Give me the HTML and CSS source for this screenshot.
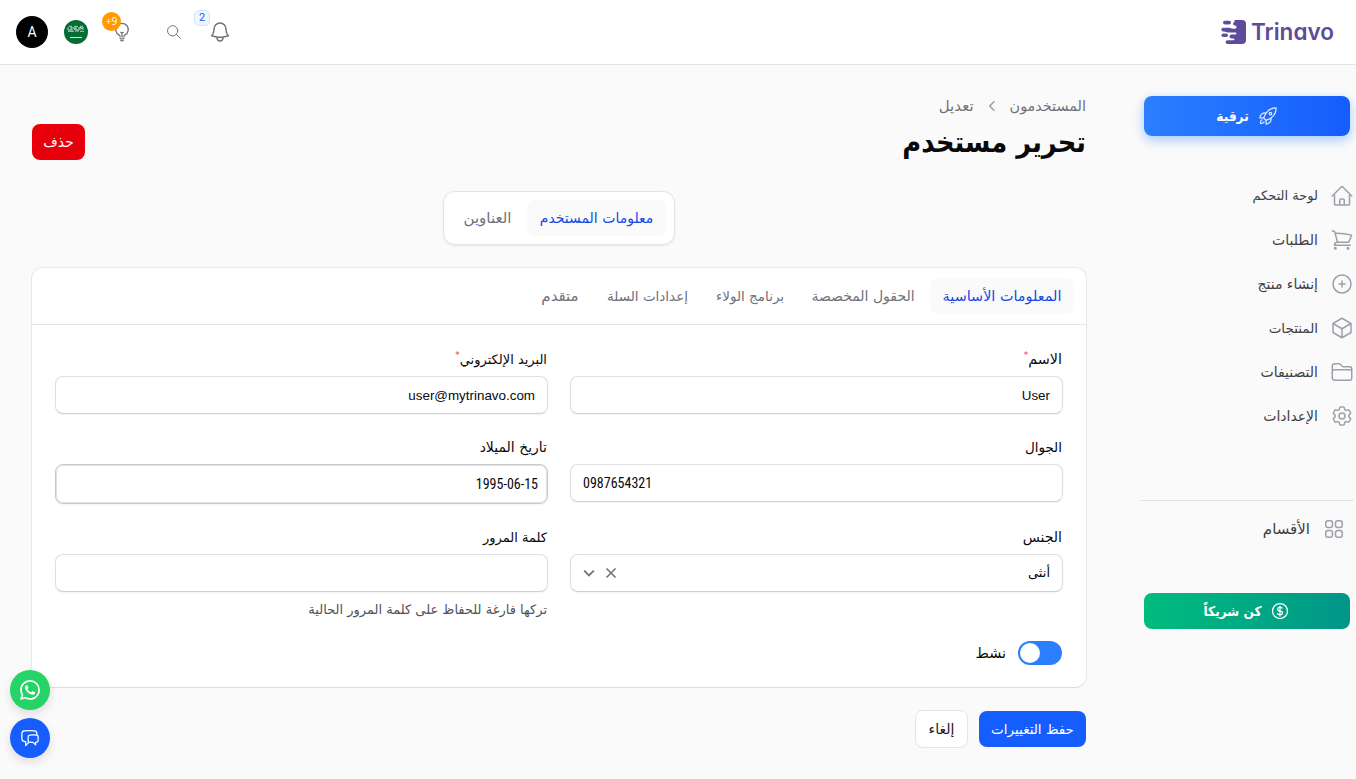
FILE: index.html
```html
<!DOCTYPE html>
<html lang="ar" dir="rtl">
<head>
<meta charset="utf-8">
<title>تحرير مستخدم</title>
<link rel="stylesheet" href="styles.css">
</head>
<body>
<header class="topbar">
  <div class="logo" dir="ltr">
    <svg class="logo-mark" width="26" height="24" viewBox="0 0 26 24" fill="#5f4b9b"><path d="M13.500 0h7.500a4 4 0 0 1 4 4v16a4 4 0 0 1-4 4H6.500a1.900 1.900 0 0 1 0-3.800H12c2 0 2-1.700 0-1.700h-1.500a2 2 0 0 1 0-4H14c2 0 2-2 0-2H7c-2 0-2-1-4-1H2.200a1.900 1.900 0 0 1 0-3.800H8c2 0 2 1 4 1h2c2 0 2-3 0-3.200h-.5a1.800 1.800 0 0 1 0-3.500z"/><rect x="2" y=".8" width="8" height="3.600" rx="1.800"/><rect x="0.500" y="13.500" width="6.500" height="3.600" rx="1.800"/></svg>
    <span class="logo-text">Trinavo</span>
  </div>
  <div class="tools">
    <div class="tool bell"><svg width="24" height="24" viewBox="0 0 24 24" fill="none" stroke="#71717b" stroke-width="1.500" stroke-linecap="round" stroke-linejoin="round"><path d="M14.857 17.082a24 24 0 0 0 5.454-1.310A8.970 8.970 0 0 1 18 9.750V9A6 6 0 0 0 6 9v.75a8.970 8.970 0 0 1-2.312 6.022c1.733.64 3.560 1.085 5.455 1.310m5.714 0a24.300 24.300 0 0 1-5.714 0m5.714 0a3 3 0 1 1-5.714 0"/></svg><span class="count">2</span></div>
    <div class="tool search"><svg width="16" height="16" viewBox="0 0 24 24" fill="none" stroke="#71717b" stroke-width="1.500" stroke-linecap="round"><path d="m21.500 21.500-5.700-5.700M17.700 10.200a7.700 7.700 0 1 1-15.400 0 7.700 7.700 0 0 1 15.400 0"/></svg></div>
    <div class="tool bulb"><svg width="20" height="20" viewBox="0 0 24 24" fill="none" stroke="#71717b" stroke-width="1.500" stroke-linecap="round" stroke-linejoin="round"><path d="M12 18v-5.250m0 0a6 6 0 0 0 1.500-.189m-1.500.189a6 6 0 0 1-1.500-.189m3.750 7.478a12 12 0 0 1-4.500 0m3.750 2.383a14.400 14.400 0 0 1-3 0M14.250 18v-.192c0-.983.658-1.823 1.508-2.316a7.500 7.500 0 1 0-7.517 0c.85.493 1.509 1.333 1.509 2.316V18"/></svg><span class="tips" dir="ltr">+9</span></div>
    <div class="flag"><svg width="24" height="24" viewBox="0 0 24 24"><circle cx="12" cy="12" r="12" fill="#046c35"/><g fill="none" stroke="#dcebe1" stroke-width=".8"><path d="M4 7v3h3V7m1 0v4m1-4 2 3V7m1 0v3h3V7m1 3V7l2 2V7m1 0v3M4 11.300h6m1-.3h4m1 .3h4M5 6.300h3m2 0h4m2 0h3"/><path d="M6 17.500h12" stroke-width="1"/></g></svg></div>
    <div class="avatar">A</div>
  </div>
</header>
<div class="body">
  <aside class="side">
    <a class="cta upgrade"><svg width="20" height="20" viewBox="0 0 24 24" fill="none" stroke="#fff" stroke-opacity=".85" stroke-width="1.500" stroke-linecap="round" stroke-linejoin="round"><path d="M15.590 14.370a6 6 0 0 1-5.840 7.380v-4.800m5.840-2.580a14.980 14.980 0 0 0 6.160-12.120A14.980 14.980 0 0 0 9.631 8.410m5.960 5.960a14.900 14.900 0 0 1-5.841 2.580m-.119-8.540a6 6 0 0 0-7.381 5.840h4.800m2.581-5.840a14.900 14.900 0 0 0-2.580 5.840m2.699 2.700a15 15 0 0 1-.311.060 15.100 15.100 0 0 1-2.448-2.448l.060-.312m-2.240 2.390a4.490 4.490 0 0 0-1.757 4.306 4.490 4.490 0 0 0 4.306-1.758M16.500 9a1.500 1.500 0 1 1-3 0 1.500 1.500 0 0 1 3 0"/></svg><span class="t">ترقية</span></a>
    <nav class="nav">
      <a class="item"><svg class="ico" viewBox="0 0 24 24"><path d="m2.250 12 8.954-8.955a1.130 1.130 0 0 1 1.592 0L21.750 12M4.500 9.750v10.125c0 .621.504 1.125 1.125 1.125H9.750v-4.875c0-.621.504-1.125 1.125-1.125h2.250c.621 0 1.125.504 1.125 1.125V21h4.125c.621 0 1.125-.504 1.125-1.125V9.750M8.250 21h8.250"/></svg><span class="t xs">لوحة التحكم</span></a>
      <a class="item"><svg class="ico" viewBox="0 0 24 24"><path d="M2.250 3h1.386c.51 0 .955.343 1.087.835l.383 1.437M7.500 14.250a3 3 0 0 0-3 3h15.750m-12.750-3h11.218a60 60 0 0 0 2.890-7.140A60.100 60.100 0 0 0 5.106 5.272M7.500 14.250 5.106 5.272M6 20.250a.75.75 0 1 1-1.500 0 .75.75 0 0 1 1.500 0m12.750 0a.75.75 0 1 1-1.500 0 .75.75 0 0 1 1.500 0"/></svg><span class="t md">الطلبات</span></a>
      <a class="item"><svg class="ico" viewBox="0 0 24 24"><path d="M12 9v6m3-3H9m12 0a9 9 0 1 1-18 0 9 9 0 0 1 18 0"/></svg><span class="t md">إنشاء منتج</span></a>
      <a class="item"><svg class="ico" viewBox="0 0 24 24"><path d="m21 7.500-9-5.250L3 7.500m18 0-9 5.250m9-5.250v9l-9 5.250M3 7.500l9 5.250M3 7.500v9l9 5.250m0-9v9"/></svg><span class="t sm">المنتجات</span></a>
      <a class="item"><svg class="ico" viewBox="0 0 24 24"><path d="M2.250 12.750V6A2.250 2.250 0 0 1 4.500 3.750h4.629a1.500 1.500 0 0 1 1.060.44l2.122 2.120a1.500 1.500 0 0 0 1.060.44H19.500A2.250 2.250 0 0 1 21.750 9v9a2.250 2.250 0 0 1-2.250 2.250h-15A2.250 2.250 0 0 1 2.250 18v-5.250M2.250 11.600A2.250 2.250 0 0 1 4.500 9.750h15a2.250 2.250 0 0 1 2.250 1.850"/></svg><span class="t md">التصنيفات</span></a>
      <a class="item"><svg class="ico" viewBox="0 0 24 24"><path d="M9.594 3.940c.09-.542.56-.94 1.110-.94h2.593c.55 0 1.020.398 1.110.94l.213 1.281c.063.374.313.686.645.870q.11.060.22.127c.325.196.72.257 1.075.124l1.217-.456a1.125 1.125 0 0 1 1.370.490l1.296 2.247a1.125 1.125 0 0 1-.260 1.431l-1.003.827c-.293.241-.438.613-.430.992a7 7 0 0 1 0 .255c-.008.378.137.750.430.991l1.004.827c.424.350.534.955.260 1.430l-1.298 2.247a1.125 1.125 0 0 1-1.369.491l-1.217-.456c-.355-.133-.750-.072-1.076.124a7 7 0 0 1-.220.128c-.331.183-.581.495-.644.869l-.213 1.281c-.090.543-.560.940-1.110.940h-2.594c-.550 0-1.019-.398-1.110-.940l-.213-1.281c-.062-.374-.312-.686-.644-.870a7 7 0 0 1-.220-.127c-.325-.196-.720-.257-1.076-.124l-1.217.456a1.125 1.125 0 0 1-1.369-.490l-1.297-2.247a1.125 1.125 0 0 1 .260-1.431l1.004-.827c.292-.240.437-.613.430-.991a7 7 0 0 1 0-.255c.007-.380-.138-.751-.430-.992l-1.004-.827a1.125 1.125 0 0 1-.260-1.430l1.297-2.247a1.125 1.125 0 0 1 1.370-.491l1.216.456c.356.133.751.072 1.076-.124q.108-.066.220-.128c.332-.183.582-.495.644-.869z"/><path d="M15 12a3 3 0 1 1-6 0 3 3 0 0 1 6 0"/></svg><span class="t md">الإعدادات</span></a>
    </nav>
    <hr class="rule">
    <a class="item sections"><svg class="ico" viewBox="0 0 24 24"><path d="M3.750 6A2.250 2.250 0 0 1 6 3.750h2.250A2.250 2.250 0 0 1 10.500 6v2.250a2.250 2.250 0 0 1-2.250 2.250H6a2.250 2.250 0 0 1-2.250-2.250zM3.750 15.750A2.250 2.250 0 0 1 6 13.500h2.250a2.250 2.250 0 0 1 2.250 2.250V18a2.250 2.250 0 0 1-2.250 2.250H6A2.250 2.250 0 0 1 3.750 18zM13.500 6a2.250 2.250 0 0 1 2.250-2.250H18A2.250 2.250 0 0 1 20.250 6v2.250A2.250 2.250 0 0 1 18 10.500h-2.250a2.250 2.250 0 0 1-2.250-2.250zM13.500 15.750a2.250 2.250 0 0 1 2.250-2.250H18a2.250 2.250 0 0 1 2.250 2.250V18A2.250 2.250 0 0 1 18 20.250h-2.250A2.250 2.250 0 0 1 13.500 18z"/></svg><span class="t xl">الأقسام</span></a>
    <a class="cta partner"><svg width="20" height="20" viewBox="0 0 24 24" fill="none" stroke="#fff" stroke-width="1.500" stroke-linecap="round" stroke-linejoin="round"><path d="M12 6v12m-3-2.818.879.659c1.171.879 3.070.879 4.242 0s1.172-2.303 0-3.182C13.536 12.219 12.768 12 12 12c-.725 0-1.450-.220-2.003-.659-1.106-.879-1.106-2.303 0-3.182s2.900-.879 4.006 0l.415.330M21 12a9 9 0 1 1-18 0 9 9 0 0 1 18 0"/></svg><span class="t">كن شريكاً</span></a>
  </aside>
  <main class="main">
    <div class="page-head">
      <div>
        <div class="crumbs"><span class="t lg">المستخدمون</span><svg width="20" height="20" viewBox="0 0 20 20" fill="none" stroke="#9f9fa9" stroke-width="1.600" stroke-linecap="round" stroke-linejoin="round"><path d="M12 5.700 7.700 10l4.300 4.300"/></svg><span class="t xl">تعديل</span></div>
        <h1 class="title">تحرير مستخدم</h1>
      </div>
      <button class="btn danger"><span class="t md">حذف</span></button>
    </div>
    <div class="pills"><a class="tab on md" style="width:115px">معلومات المستخدم</a><a class="tab xl" style="width:47px">العناوين</a></div>
    <section class="card">
      <div class="tabs"><a class="tab on lg" style="width:120px">المعلومات الأساسية</a><a class="tab md" style="width:102px">الحقول المخصصة</a><a class="tab sm" style="width:68px">برنامج الولاء</a><a class="tab sm" style="width:81px">إعدادات السلة</a><a class="tab xl" style="width:38px">متقدم</a></div>
      <div class="fields">
        <div class="field"><label class="lg">الاسم<sup>*</sup></label><div class="input latin">User</div></div>
        <div class="field"><label class="xs">البريد الإلكتروني<sup>*</sup></label><div class="input latin">user@mytrinavo.com</div></div>
        <div class="field"><label class="sm">الجوال</label><div class="input num" dir="ltr">0987654321</div></div>
        <div class="field"><label class="md">تاريخ الميلاد</label><div class="input num date">1995-06-15</div></div>
        <div class="field"><label class="md">الجنس</label><div class="input select"><span class="xs">أنثى</span><span class="ctl"><svg width="12" height="12" viewBox="0 0 12 12" fill="none" stroke="#71717b" stroke-width="1.600"><path d="m1.500 1.500 9 9m0-9-9 9"/></svg><svg width="12" height="12" viewBox="0 0 12 12" fill="none" stroke="#71717b" stroke-width="1.800"><path d="m1.200 3.600 4.800 4.800 4.800-4.800"/></svg></span></div></div>
        <div class="field"><label class="xs">كلمة المرور</label><div class="input"></div><p class="hint xs">تركها فارغة للحفاظ على كلمة المرور الحالية</p></div>
      </div>
      <div class="active-row"><span class="switch"><i></i></span><span class="t lg">نشط</span></div>
    </section>
    <div class="actions"><button class="btn save"><span class="t sm">حفظ التغييرات</span></button><button class="btn cancel"><span class="t md">إلغاء</span></button></div>
  </main>
</div>
<div class="floats">
  <a class="fab wa"><svg width="20" height="20" viewBox="0 0 24 24" fill="#fff"><path d="M17.472 14.382c-.297-.149-1.758-.867-2.030-.967-.273-.099-.471-.148-.670.150-.197.297-.767.966-.940 1.164-.173.199-.347.223-.644.075-.297-.150-1.255-.463-2.390-1.475-.883-.788-1.480-1.761-1.653-2.059-.173-.297-.018-.458.130-.606.134-.133.298-.347.446-.520.149-.174.198-.298.298-.497.099-.198.050-.371-.025-.520-.075-.149-.669-1.612-.916-2.207-.242-.579-.487-.500-.669-.510-.173-.008-.371-.010-.570-.010-.198 0-.520.074-.792.372-.272.297-1.040 1.016-1.040 2.479 0 1.462 1.065 2.875 1.213 3.074.149.198 2.096 3.200 5.077 4.487.709.306 1.262.489 1.694.625.712.227 1.360.195 1.871.118.571-.085 1.758-.719 2.006-1.413.248-.694.248-1.289.173-1.413-.074-.124-.272-.198-.570-.347m-5.421 7.403h-.004a9.870 9.870 0 0 1-5.031-1.378l-.361-.214-3.741.982.998-3.648-.235-.374a9.860 9.860 0 0 1-1.510-5.260c.001-5.450 4.436-9.884 9.888-9.884a9.820 9.820 0 0 1 6.988 2.898 9.825 9.825 0 0 1 2.893 6.994c-.003 5.450-4.437 9.884-9.885 9.884m8.413-18.297A11.815 11.815 0 0 0 12.050 0C5.495 0 .160 5.335.157 11.892c0 2.096.547 4.142 1.588 5.945L.057 24l6.305-1.654a11.880 11.880 0 0 0 5.683 1.448h.005c6.554 0 11.890-5.335 11.893-11.893a11.820 11.820 0 0 0-3.480-8.413"/></svg></a>
  <a class="fab chat"><svg width="20" height="20" viewBox="0 0 24 24" fill="none" stroke="#fff" stroke-width="1.500" stroke-linecap="round" stroke-linejoin="round"><path d="M20.250 8.511c.884.284 1.500 1.128 1.500 2.097v4.286c0 1.136-.847 2.100-1.980 2.193q-.51.041-1.020.072v3.091l-3-3a49 49 0 0 1-4.020-.163 2.100 2.100 0 0 1-.825-.242m9.345-8.334a2 2 0 0 0-.476-.095 48.600 48.600 0 0 0-8.048 0c-1.131.094-1.976 1.057-1.976 2.192v4.286c0 .837.460 1.580 1.155 1.951m9.345-8.334V6.637c0-1.621-1.152-3.026-2.760-3.235A48.500 48.500 0 0 0 11.250 3c-2.115 0-4.198.137-6.240.402-1.608.209-2.760 1.614-2.760 3.235v6.226c0 1.621 1.152 3.026 2.760 3.235q.865.113 1.740.194V21l4.155-4.155"/></svg></a>
</div>
</body>
</html>
```
FILE: styles.css
```css
* { box-sizing: border-box; }
body { margin: 0; background: #fafafa; height: 779px; overflow: hidden; color: #09090b; font-family: "DejaVu Sans", sans-serif; font-size: 13.5px; line-height: 20px; }
svg { display: block; flex: none; }
.xs { font-size: 13px; }
.sm { font-size: 13.5px; }
.md { font-size: 14px; }
.lg { font-size: 14.4px; }
.xl { font-size: 15px; }
.topbar { height: 65px; background: #fff; border-bottom: 1px solid #e4e4e7; display: flex; justify-content: space-between; align-items: center; padding: 0 21px 1px 16px; }
.logo { display: flex; align-items: center; gap: 4px; color: #5f4b9b; }
.logo-text { font: 600 22.5px/30px Inter, sans-serif; font-feature-settings: "cv11"; width: 84px; white-space: nowrap; }
.tools { display: flex; align-items: center; }
.tool { position: relative; display: flex; align-items: center; justify-content: center; }
.bell { width: 22px; margin-left: 27px; }
.search { width: 16px; margin-left: 34px; }
.bulb { width: 20px; margin-left: 24px; }
.flag { margin-left: 16px; }
.count { position: absolute; left: -15px; top: -10px; width: 16px; height: 16px; border: 1px solid #d3e5ff; border-radius: 5px; background: #eff6ff; color: #155dfc; font: 400 11px/14px Roboto, sans-serif; text-align: center; }
.tips { position: absolute; left: -10px; top: -10px; width: 19px; height: 19px; border-radius: 50%; background: #ff9900; color: #fff; font: 500 10px/19px "Open Sans", sans-serif; text-align: center; }
.avatar { width: 32px; height: 32px; border-radius: 50%; background: #000; color: #fff; text-align: center; font: 14px/33px Roboto, sans-serif; }
.body { display: flex; }
.side { width: 238px; flex: none; padding: 31px 0 0 26px; }
.t { white-space: nowrap; }
.cta { display: flex; align-items: center; justify-content: center; gap: 9px; margin-right: 6px; border-radius: 8px; color: #fff; font-family: "DejaVu Sans Condensed", "DejaVu Sans", sans-serif; font-stretch: condensed; font-weight: 700; }
.upgrade { height: 40px; background: linear-gradient(90deg, #2b7fff, #155dfc); box-shadow: 0 4px 12px rgba(43,127,255,.4); }
.partner { height: 36px; background: linear-gradient(90deg, #00bc7d, #009689); margin-top: 44px; }
.nav { display: flex; flex-direction: column; gap: 4px; margin-top: 40px; padding-right: 2px; }
.item { display: flex; align-items: center; gap: 12px; height: 40px; color: #3f3f46; }
.ico { width: 24px; height: 24px; fill: none; stroke: #9f9fa9; stroke-width: 1.5; stroke-linecap: round; stroke-linejoin: round; }
.rule { border: 0; border-top: 1px solid #e4e4e7; margin: 64px 2px 8px -4px; width: 214px; }
.sections { padding-right: 10px; }
.main { flex: 1; padding: 31px 32px 0; min-width: 0; }
.page-head { display: flex; justify-content: space-between; align-items: center; height: 72px; }
.crumbs { display: flex; align-items: center; gap: 8px; color: #71717b; height: 20px; }
.title { font-family: "DejaVu Sans Condensed", "DejaVu Sans", sans-serif; font-stretch: condensed; font-size: 28.6px; line-height: 36px; margin: 8px 0; font-weight: 700; white-space: nowrap; }
.btn { font: inherit; height: 36px; border: 0; border-radius: 8px; color: #fff; padding: 0; text-align: center; white-space: nowrap; }
.danger { background: #e7000b; width: 53px; margin-top: 20px; }
.pills { width: 232px; height: 54px; border: 1px solid #e4e4e7; border-radius: 12px; background: #fff; box-shadow: 0 1px 2px rgba(0,0,0,.08); margin: 23px auto 0; display: flex; gap: 4px; padding: 8px; }
.tab { box-sizing: content-box; height: 36px; line-height: 37px; padding: 0 12px; border-radius: 8px; color: #71717b; white-space: nowrap; display: flex; justify-content: center; flex: none; }
.tab.on { background: #fafafa; color: #1447e6; }
.card { margin: 22px -1px 0; height: 421px; background: #fff; border: 1px solid #e8e8ea; border-bottom-color: #dedee1; border-radius: 12px; }
.tabs { display: flex; gap: 4px; height: 57px; border-bottom: 1px solid #e4e4e7; padding: 10px 12px; }
.fields { display: grid; grid-template-columns: 493px 493px; column-gap: 22px; padding: 24px 23px 0 0; grid-template-rows: 88px 90px 80px; }
.field label { display: block; height: 20px; line-height: 21px; margin: 0 1px 7px 0; }
.field sup { color: #fb2c36; font-size: 9px; line-height: 0; vertical-align: 6px; }
.input { height: 38px; border: 1px solid #dfdfe2; border-bottom-color: #d0d0d3; border-radius: 8px; background: #fff; box-shadow: 0 1px 2px rgba(0,0,0,.05); padding: 0 12px; line-height: 36px; }
.latin { font-family: "Liberation Sans", sans-serif; font-size: 13.4px; line-height: 37px; }
.num { font-family: Roboto, sans-serif; font-stretch: condensed; font-size: 14px; }
.date { height: 40px; border: 1px solid #c9c9cd; outline: 1px solid #e0e0e3; outline-offset: -2px; padding: 0 9px; line-height: 38px; }
.select { display: flex; justify-content: space-between; align-items: center; }
.ctl { display: flex; gap: 10px; }
.hint { margin: 8px 1px 0 0; color: #52525c; white-space: nowrap; }
.active-row { display: flex; align-items: center; gap: 12px; padding-right: 24px; margin-top: 34px; }
.switch { width: 44px; height: 24px; border-radius: 12px; background: #2b7fff; display: flex; justify-content: flex-end; padding: 2px; }
.switch i { width: 20px; height: 20px; border-radius: 50%; background: #fff; }
.actions { display: flex; gap: 11px; align-items: center; margin-top: 22px; }
.save { background: #155dfc; width: 107px; }
.cancel { background: #fff; border: 1px solid #e4e4e7; color: #18181b; width: 53px; height: 38px; }
.floats { position: absolute; left: 10px; top: 670px; display: flex; flex-direction: column; gap: 8px; }
.fab { width: 40px; height: 40px; border-radius: 50%; display: flex; align-items: center; justify-content: center; box-shadow: 0 4px 10px rgba(0,0,0,.12); }
.wa { background: #25d366; }
.chat { background: #155dfc; }
```
